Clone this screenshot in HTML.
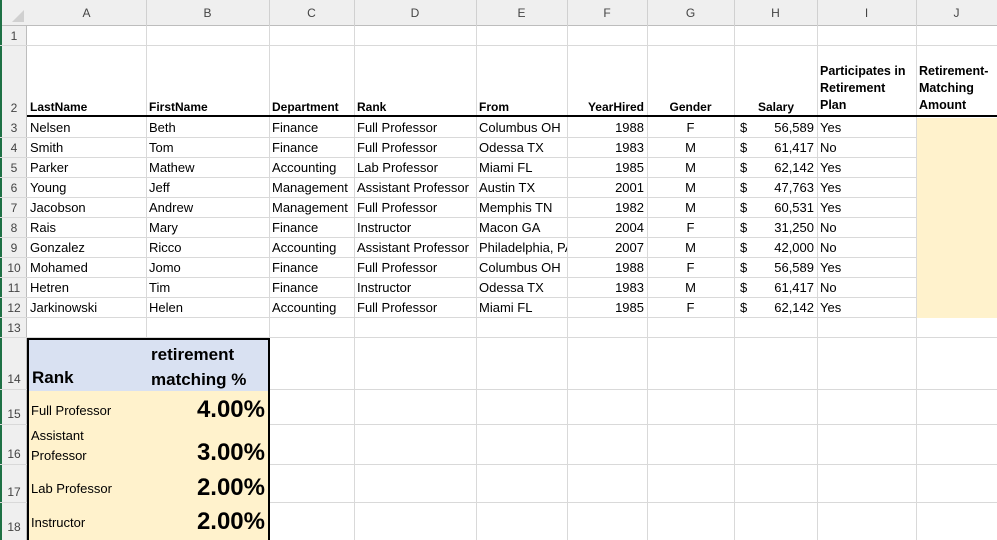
<!DOCTYPE html>
<html><head><meta charset="utf-8"><style>
*{margin:0;padding:0;box-sizing:border-box}
body{width:997px;height:540px;overflow:hidden;background:#fff;font-family:"Liberation Sans",Arial,sans-serif;font-size:13px;color:#000;position:relative}
.a{position:absolute}
.vl{position:absolute;top:26px;height:514px;width:1px;background:#d9d9d9}
.hl{position:absolute;left:0;width:997px;height:1px;background:#d9d9d9}
.ch{position:absolute;top:0;height:26px;line-height:26px;text-align:center;color:#444;font-size:12px}
.rh{position:absolute;left:1px;width:26px;color:#444;font-size:12px;text-align:center}
.c{position:absolute;height:20px;line-height:20px;overflow:hidden;white-space:nowrap;padding:0 3px}
.r{text-align:right}.m{text-align:center}
.h{position:absolute;font-weight:bold;font-size:12px;line-height:17px}
</style></head><body>
<div class="a" style="left:0;top:0;width:997px;height:26px;background:#efefef;border-bottom:1px solid #bdbdbd"></div>
<div class="a" style="left:0;top:26px;width:27px;height:514px;background:#efefef;border-right:1px solid #bdbdbd"></div>
<div class="a" style="left:0;top:0;width:2px;height:540px;background:#1e7145"></div>
<div class="a" style="left:12px;top:10px;width:0;height:0;border-left:12px solid transparent;border-bottom:12px solid #d0d0d0"></div>
<div class="ch" style="left:27px;width:119px">A</div>
<div class="ch" style="left:146px;width:123px">B</div>
<div class="ch" style="left:269px;width:85px">C</div>
<div class="ch" style="left:354px;width:122px">D</div>
<div class="ch" style="left:476px;width:91px">E</div>
<div class="ch" style="left:567px;width:80px">F</div>
<div class="ch" style="left:647px;width:87px">G</div>
<div class="ch" style="left:734px;width:83px">H</div>
<div class="ch" style="left:817px;width:99px">I</div>
<div class="ch" style="left:916px;width:81px">J</div>
<div class="a" style="left:146px;top:0;width:1px;height:26px;background:#d0d0d0"></div>
<div class="a" style="left:269px;top:0;width:1px;height:26px;background:#d0d0d0"></div>
<div class="a" style="left:354px;top:0;width:1px;height:26px;background:#d0d0d0"></div>
<div class="a" style="left:476px;top:0;width:1px;height:26px;background:#d0d0d0"></div>
<div class="a" style="left:567px;top:0;width:1px;height:26px;background:#d0d0d0"></div>
<div class="a" style="left:647px;top:0;width:1px;height:26px;background:#d0d0d0"></div>
<div class="a" style="left:734px;top:0;width:1px;height:26px;background:#d0d0d0"></div>
<div class="a" style="left:817px;top:0;width:1px;height:26px;background:#d0d0d0"></div>
<div class="a" style="left:916px;top:0;width:1px;height:26px;background:#d0d0d0"></div>
<div class="vl" style="left:146px"></div><div class="vl" style="left:269px"></div><div class="vl" style="left:354px"></div><div class="vl" style="left:476px"></div><div class="vl" style="left:567px"></div><div class="vl" style="left:647px"></div><div class="vl" style="left:734px"></div><div class="vl" style="left:817px"></div><div class="vl" style="left:916px"></div>
<div class="hl" style="top:45px"></div><div class="hl" style="top:137px"></div><div class="hl" style="top:157px"></div><div class="hl" style="top:177px"></div><div class="hl" style="top:197px"></div><div class="hl" style="top:217px"></div><div class="hl" style="top:237px"></div><div class="hl" style="top:257px"></div><div class="hl" style="top:277px"></div><div class="hl" style="top:297px"></div><div class="hl" style="top:317px"></div><div class="hl" style="top:337px"></div><div class="hl" style="top:389px"></div><div class="hl" style="top:424px"></div><div class="hl" style="top:464px"></div><div class="hl" style="top:502px"></div>
<div class="a" style="left:917px;top:118px;width:80px;height:200px;background:#fff2cc"></div>
<div class="a" style="left:27px;top:115px;width:970px;height:2px;background:#000"></div>
<div class="rh" style="top:26px;height:19px;line-height:20px">1</div>
<div class="rh" style="top:98px;line-height:20px">2</div>
<div class="rh" style="top:118px;line-height:20px">3</div>
<div class="rh" style="top:138px;line-height:20px">4</div>
<div class="rh" style="top:158px;line-height:20px">5</div>
<div class="rh" style="top:178px;line-height:20px">6</div>
<div class="rh" style="top:198px;line-height:20px">7</div>
<div class="rh" style="top:218px;line-height:20px">8</div>
<div class="rh" style="top:238px;line-height:20px">9</div>
<div class="rh" style="top:258px;line-height:20px">10</div>
<div class="rh" style="top:278px;line-height:20px">11</div>
<div class="rh" style="top:298px;line-height:20px">12</div>
<div class="rh" style="top:318px;line-height:20px">13</div>
<div class="rh" style="top:369px;line-height:20px">14</div>
<div class="rh" style="top:404px;line-height:20px">15</div>
<div class="rh" style="top:444px;line-height:20px">16</div>
<div class="rh" style="top:482px;line-height:20px">17</div>
<div class="rh" style="top:517px;line-height:20px">18</div>
<div class="h" style="left:30px;top:99px">LastName</div>
<div class="h" style="left:149px;top:99px">FirstName</div>
<div class="h" style="left:272px;top:99px">Department</div>
<div class="h" style="left:357px;top:99px">Rank</div>
<div class="h" style="left:479px;top:99px">From</div>
<div class="h" style="left:567px;top:99px;width:77px;text-align:right">YearHired</div>
<div class="h" style="left:647px;top:99px;width:87px;text-align:center">Gender</div>
<div class="h" style="left:734px;top:99px;width:60px;text-align:right">Salary</div>
<div class="h" style="left:820px;top:63px;font-size:12.5px">Participates in<br>Retirement<br>Plan</div>
<div class="h" style="left:919px;top:63px;font-size:12.5px">Retirement-<br>Matching<br>Amount</div>
<div id="d"></div>
<script>
var rows=[["Nelsen","Beth","Finance","Full Professor","Columbus OH","1988","F","56,589","Yes"],
["Smith","Tom","Finance","Full Professor","Odessa TX","1983","M","61,417","No"],
["Parker","Mathew","Accounting","Lab Professor","Miami FL","1985","M","62,142","Yes"],
["Young","Jeff","Management","Assistant Professor","Austin TX","2001","M","47,763","Yes"],
["Jacobson","Andrew","Management","Full Professor","Memphis TN","1982","M","60,531","Yes"],
["Rais","Mary","Finance","Instructor","Macon GA","2004","F","31,250","No"],
["Gonzalez","Ricco","Accounting","Assistant Professor","Philadelphia, PA","2007","M","42,000","No"],
["Mohamed","Jomo","Finance","Full Professor","Columbus OH","1988","F","56,589","Yes"],
["Hetren","Tim","Finance","Instructor","Odessa TX","1983","M","61,417","No"],
["Jarkinowski","Helen","Accounting","Full Professor","Miami FL","1985","F","62,142","Yes"]];
var L=[27,146,269,354,476,567,647,734,817,916],h="";
rows.forEach(function(r,i){var y=118+i*20;
for(var k=0;k<5;k++){var w=L[k+1]-L[k];h+='<div class="c" style="left:'+L[k]+'px;top:'+y+'px;width:'+w+'px">'+r[k]+'</div>';}
h+='<div class="c r" style="left:567px;top:'+y+'px;width:80px">'+r[5]+'</div>';
h+='<div class="c m" style="left:647px;top:'+y+'px;width:87px">'+r[6]+'</div>';
h+='<div class="c" style="left:737px;top:'+y+'px;width:20px">$</div>';
h+='<div class="c r" style="left:734px;top:'+y+'px;width:83px">'+r[7]+'</div>';
h+='<div class="c" style="left:817px;top:'+y+'px;width:99px">'+r[8]+'</div>';});
document.getElementById("d").outerHTML=h;
</script>
<div class="a" style="left:27px;top:338px;width:243px;height:202px;border:2px solid #000;border-bottom:none;background:#fff2cc;overflow:hidden">
 <div class="a" style="left:0;top:0;width:241px;height:51px;background:#d9e1f2"></div>
 <div class="a" style="left:3px;top:28px;font-size:17px;font-weight:bold">Rank</div>
 <div class="a" style="left:122px;top:2px;font-size:17px;font-weight:bold;line-height:25px">retirement<br>matching %</div>
 <div class="a" style="left:2px;top:63px;font-size:13px">Full Professor</div>
 <div class="a" style="right:3px;top:56px;font-size:24px;font-weight:bold">4.00%</div>
 <div class="a" style="left:2px;top:86px;font-size:13px;line-height:20px">Assistant<br>Professor</div>
 <div class="a" style="right:3px;top:99px;font-size:24px;font-weight:bold">3.00%</div>
 <div class="a" style="left:2px;top:141px;font-size:13px">Lab Professor</div>
 <div class="a" style="right:3px;top:134px;font-size:24px;font-weight:bold">2.00%</div>
 <div class="a" style="left:2px;top:175px;font-size:13px">Instructor</div>
 <div class="a" style="right:3px;top:168px;font-size:24px;font-weight:bold">2.00%</div>
</div>
</body></html>
